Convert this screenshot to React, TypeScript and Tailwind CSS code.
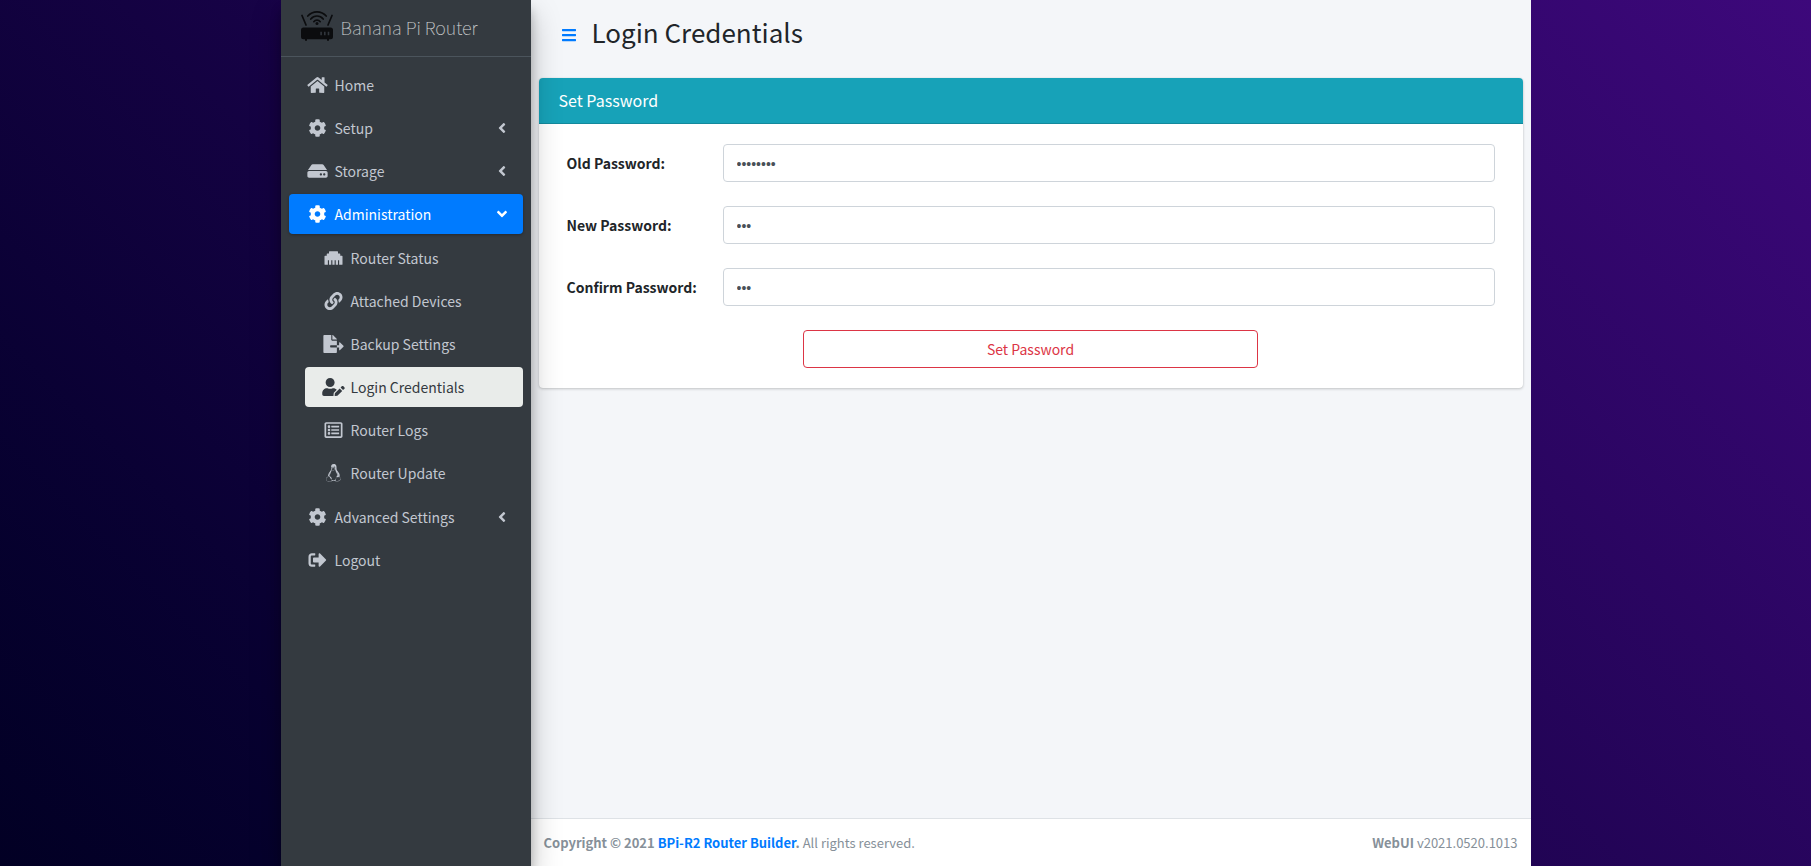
import React from "react";
import {
  FaAngleDown,
  FaAngleLeft,
  FaBars,
  FaCog,
  FaEthernet,
  FaFileExport,
  FaHdd,
  FaHome,
  FaLink,
  FaLinux,
  FaRegListAlt,
  FaSignOutAlt,
  FaUserEdit,
} from "react-icons/fa";
import type { IconType } from "react-icons";

type Item = {
  label: string;
  icon: IconType;
  branch?: boolean;
  children?: Item[];
  current?: boolean;
};

const menu: Item[] = [
  { label: "Home", icon: FaHome },
  { label: "Setup", icon: FaCog, branch: true },
  { label: "Storage", icon: FaHdd, branch: true },
  {
    label: "Administration",
    icon: FaCog,
    branch: true,
    children: [
      { label: "Router Status", icon: FaEthernet },
      { label: "Attached Devices", icon: FaLink },
      { label: "Backup Settings", icon: FaFileExport },
      { label: "Login Credentials", icon: FaUserEdit, current: true },
      { label: "Router Logs", icon: FaRegListAlt },
      { label: "Router Update", icon: FaLinux },
    ],
  },
  { label: "Advanced Settings", icon: FaCog, branch: true },
  { label: "Logout", icon: FaSignOutAlt },
];

const fields = [
  { id: "old-password", label: "Old Password:", value: "password" },
  { id: "new-password", label: "New Password:", value: "abc" },
  { id: "confirm-password", label: "Confirm Password:", value: "abc" },
];

function RouterLogo() {
  return (
    <svg viewBox="0 0 32 32" className="mb-0.5 size-8" aria-hidden="true">
      <g fill="none" stroke="#0b0c0e" strokeWidth="1.7" strokeLinecap="round">
        <path d="M1 5.500 5 15M31 5.500 27 15" />
        <path d="M6.800 6C11.500 .4 20.500 .4 25.200 6M9.800 9C13 5 19 5 22.200 9M12.800 11.700C14.500 9.500 17.500 9.500 19.200 11.700" />
      </g>
      <circle cx="16" cy="13.600" r="1.500" fill="#0b0c0e" />
      <rect x="0" y="17.500" width="32" height="11.700" rx="2.500" fill="#0b0c0e" />
      <path d="M4 29h2v1.700H4zM26 29h2v1.700h-2z" fill="#0b0c0e" />
      <path d="M19.300 21.700h1.600v3.500h-1.600zM23 21.700h1.600v3.500H23zM26.700 21.700h1.600v3.500h-1.600z" fill="#31363c" />
    </svg>
  );
}

function NavItem({ item }: { item: Item }) {
  const Icon = item.icon;
  const Arrow = item.children ? FaAngleDown : FaAngleLeft;
  const tone = item.current
    ? "bg-[#e9ecea] text-[#343a40]"
    : item.children
      ? "bg-[#007bff] text-white shadow-[0_1px_3px_rgba(0,0,0,0.3)]"
      : "text-[#c2c7d0]";
  return (
    <li>
      <a href="#" className={`flex h-10 items-center gap-1 rounded px-4 ${tone}`}>
        <span className="flex w-[26px] shrink-0 justify-center">
          <Icon className="h-[18px] w-[23px]" />
        </span>
        <span className="grow">{item.label}</span>
        {item.branch && <Arrow className="h-4 w-2.5" />}
      </a>
      {item.children && (
        <ul className="flex flex-col gap-[3px] pt-1 pb-px pl-4">
          {item.children.map((child) => (
            <NavItem key={child.label} item={child} />
          ))}
        </ul>
      )}
    </li>
  );
}

export default function App() {
  return (
    <div className="min-h-screen bg-linear-45 from-[#020024] to-[#3d087b] font-['Noto_Sans_CJK_SC',sans-serif] text-[14px] leading-6 text-[#212529]">
      <div className="mx-auto flex min-h-screen max-w-[1250px]">
        <aside className="z-10 w-[250px] shrink-0 bg-[#343a40] shadow-[0_14px_28px_rgba(0,0,0,0.25),0_10px_10px_rgba(0,0,0,0.22)]">
          <a
            href="#"
            className="flex h-[57px] items-center gap-2 border-b border-[#4b545c] px-5 pb-0.5 text-[18px] font-thin text-white/80"
          >
            <RouterLogo />
            Banana Pi Router
          </a>
          <nav className="px-2 pt-2">
            <ul className="flex flex-col gap-[3px]">
              {menu.map((item) => (
                <NavItem key={item.label} item={item} />
              ))}
            </ul>
          </nav>
        </aside>

        <div className="flex min-w-0 grow flex-col bg-[#f4f6f9]">
          <header className="flex h-[78px] items-center gap-4 px-[31px] pb-2">
            <button type="button" aria-label="Toggle menu" className="text-[#007bff]">
              <FaBars className="h-4 w-3.5" />
            </button>
            <h1 className="pb-1.5 text-[26px] leading-8">Login Credentials</h1>
          </header>

          <main className="grow px-2">
            <section className="overflow-hidden rounded bg-white shadow-[0_0_1px_rgba(0,0,0,0.125),0_1px_3px_rgba(0,0,0,0.2)]">
              <h2 className="flex h-[46px] items-center border-b border-black/15 bg-[#17a2b8] px-5 pb-0.5 text-[16px] text-white">
                Set Password
              </h2>
              <form className="px-7 py-5" onSubmit={(e) => e.preventDefault()}>
                <div className="flex flex-col gap-6">
                  {fields.map((f) => (
                    <div key={f.id} className="flex items-center">
                      <label htmlFor={f.id} className="w-[156px] shrink-0 font-bold">
                        {f.label}
                      </label>
                      <input
                        id={f.id}
                        type="password"
                        defaultValue={f.value}
                        className="h-[38px] min-w-0 grow rounded border border-[#ced4da] bg-white px-[13px] pt-0.5 font-['Liberation_Sans',sans-serif] text-[#495057]"
                      />
                    </div>
                  ))}
                  <button
                    type="submit"
                    className="mx-auto h-[38px] w-[49%] rounded border border-[#dc3545] text-[#dc3545]"
                  >
                    Set Password
                  </button>
                </div>
              </form>
            </section>
          </main>

          <footer className="flex h-12 items-center justify-between border-t border-[#dee2e6] bg-white px-[13px] text-[13px] text-[#869099]">
            <p>
              <strong>
                Copyright © 2021 <a href="#" className="text-[#007bff]">BPi-R2 Router Builder</a>.
              </strong>{" "}
              All rights reserved.
            </p>
            <p>
              <strong>WebUI</strong> v2021.0520.1013
            </p>
          </footer>
        </div>
      </div>
    </div>
  );
}
